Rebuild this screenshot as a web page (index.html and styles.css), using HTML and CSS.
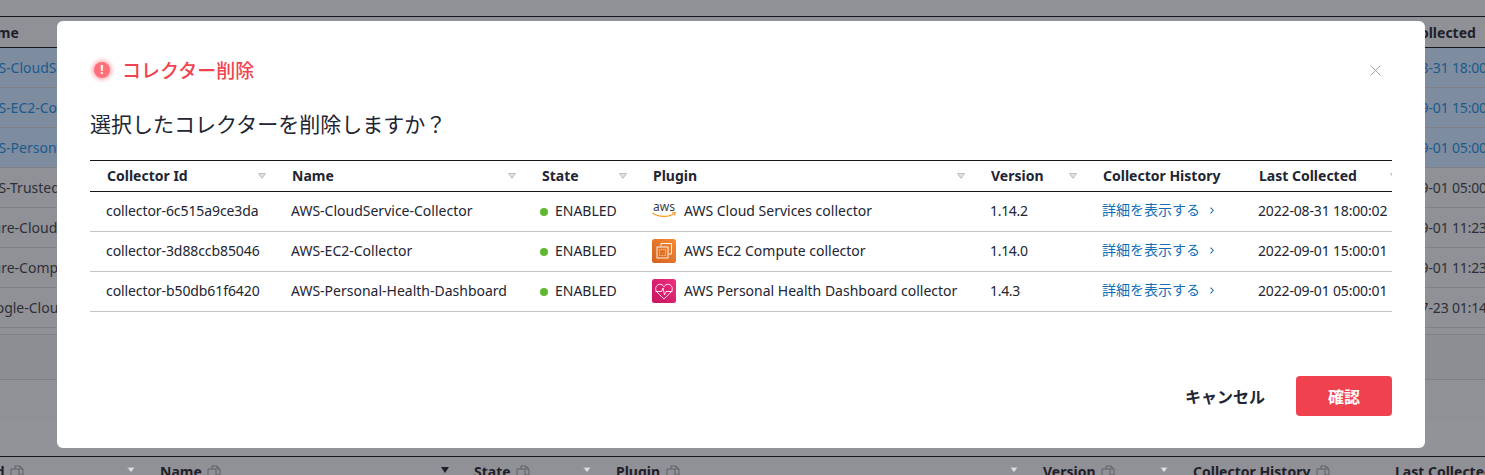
FILE: index.html
```html
<!DOCTYPE html>
<html lang="ja">
  <head>
    <meta charset="UTF-8" />
    <meta name="viewport" content="width=device-width, initial-scale=1.0" />
    <title>コレクター削除</title>
    <link rel="stylesheet" href="styles.css">
  </head>

  <body>
    <svg class="sprites" width="0" height="0" aria-hidden="true">
      <symbol id="sortIcon" viewBox="0 0 8 6">
        <path d="M0.6 0.6H7.4L4 5.3Z" fill="#e4e5e8" stroke="#a9abb2" stroke-width="0.8" />
      </symbol>
      <symbol id="copyIcon" viewBox="0 0 14 14">
        <path d="M5 1H10L13 4V10H9M5 1V4M1 4H9V13H1Z" fill="none" stroke="#5b5c63" stroke-width="0.9" />
        <path d="M10 1V4H13" fill="none" stroke="#5b5c63" stroke-width="0.9" />
      </symbol>
    </svg>

    <div class="bgPage">
      <div class="bgTable">
        <div class="bgHead">
          <span class="bgName">Name</span>
          <span class="bgDate">Last Collected</span>
        </div>
        <div class="bgRow selected"><span class="bgName">AWS-CloudService-Collector</span><span class="bgDate">2022-08-31 18:00:02</span></div>
        <div class="bgRow selected"><span class="bgName">AWS-EC2-Collector</span><span class="bgDate">2022-09-01 15:00:01</span></div>
        <div class="bgRow selected"><span class="bgName">AWS-Personal-Health-Dashboard</span><span class="bgDate">2022-09-01 05:00:01</span></div>
        <div class="bgRow"><span class="bgName">AWS-TrustedAdvisor-Collector</span><span class="bgDate">2022-09-01 05:00:01</span></div>
        <div class="bgRow"><span class="bgName">Azure-CloudService-Collector</span><span class="bgDate">2022-09-01 11:23:01</span></div>
        <div class="bgRow"><span class="bgName">Azure-Compute-Collector</span><span class="bgDate">2022-09-01 11:23:01</span></div>
        <div class="bgRow"><span class="bgName">Google-Cloud-Collector</span><span class="bgDate">2022-07-23 01:14:01</span></div>
      </div>
      <div class="bgBand"></div>
      <div class="bgBand dark"></div>
      <div class="bgBand"></div>
      <div class="bgBand light"></div>
      <div class="bgHead2">
        <div class="bgCol">Collector Id <svg class="copy"><use href="#copyIcon" /></svg><svg class="sort"><use href="#sortIcon" /></svg></div>
        <div class="bgCol">Name <svg class="copy"><use href="#copyIcon" /></svg><svg class="sort active" viewBox="0 0 8 6"><path d="M0 0H8L4 6Z" fill="#1f2029" /></svg></div>
        <div class="bgCol">State <svg class="copy"><use href="#copyIcon" /></svg><svg class="sort"><use href="#sortIcon" /></svg></div>
        <div class="bgCol">Plugin <svg class="copy"><use href="#copyIcon" /></svg><svg class="sort"><use href="#sortIcon" /></svg></div>
        <div class="bgCol">Version <svg class="copy"><use href="#copyIcon" /></svg><svg class="sort"><use href="#sortIcon" /></svg></div>
        <div class="bgCol">Collector History <svg class="copy"><use href="#copyIcon" /></svg></div>
        <div class="bgCol">Last Collected</div>
      </div>
    </div>

    <div class="overlay">
      <div class="modal">
        <div class="modalHeader">
          <div class="modalTitle">
            <span class="alertIcon">!</span>
            <span>コレクター削除</span>
          </div>
          <svg class="closeIcon" viewBox="0 0 11 11">
            <path d="M0.5 0.5L10.5 10.5M10.5 0.5L0.5 10.5" stroke="#a3a5ad" stroke-width="1" />
          </svg>
        </div>

        <p class="question">選択したコレクターを削除しますか？</p>

        <div class="tableWrap">
          <table class="collectors">
            <colgroup>
              <col class="colId" /><col class="colName" /><col class="colState" /><col class="colPlugin" />
              <col class="colVersion" /><col class="colHistory" /><col class="colLast" />
            </colgroup>
            <thead>
              <tr>
                <th>Collector Id<svg class="sort"><use href="#sortIcon" /></svg></th>
                <th>Name<svg class="sort"><use href="#sortIcon" /></svg></th>
                <th>State<svg class="sort"><use href="#sortIcon" /></svg></th>
                <th>Plugin<svg class="sort"><use href="#sortIcon" /></svg></th>
                <th>Version<svg class="sort"><use href="#sortIcon" /></svg></th>
                <th>Collector History</th>
                <th>Last Collected<svg class="sort"><use href="#sortIcon" /></svg></th>
              </tr>
            </thead>
            <tbody>
              <tr>
                <td class="idCell">collector-6c515a9ce3da</td>
                <td>AWS-CloudService-Collector</td>
                <td><span class="dot"></span>ENABLED</td>
                <td>
                  <div class="plugin">
                    <svg class="pluginIcon" viewBox="0 0 24 24">
                      <text x="12" y="11.5" text-anchor="middle" class="awsText">aws</text>
                      <path d="M0.5 14C7 18.5 17 18.5 22.5 14.5" fill="none" stroke="#f79a1e" stroke-width="1.3" />
                      <path d="M20 13.7L23.5 13.5L22.6 16.5" fill="none" stroke="#f79a1e" stroke-width="1" />
                    </svg>
                    AWS Cloud Services collector
                  </div>
                </td>
                <td class="versionCell">1.14.2</td>
                <td><a class="detail">詳細を表示する<svg class="chevron" viewBox="0 0 5 9"><path d="M0.7 0.7L4.2 4.5L0.7 8.3" /></svg></a></td>
                <td class="dateCell">2022-08-31 18:00:02</td>
              </tr>
              <tr>
                <td class="idCell">collector-3d88ccb85046</td>
                <td>AWS-EC2-Collector</td>
                <td><span class="dot"></span>ENABLED</td>
                <td>
                  <div class="plugin">
                    <svg class="pluginIcon" viewBox="0 0 24 24">
                      <defs>
                        <linearGradient id="ec2Grad" x1="0" y1="1" x2="1" y2="0">
                          <stop offset="0" stop-color="#d2601f" />
                          <stop offset="1" stop-color="#f58c34" />
                        </linearGradient>
                      </defs>
                      <rect width="24" height="24" rx="2.5" fill="url(#ec2Grad)" />
                      <path d="M9 7.5V4.5H19.5V15H16.5" fill="none" stroke="#fff" stroke-width="1" opacity="0.9" />
                      <rect x="5" y="8" width="11" height="11" fill="none" stroke="#fff" stroke-width="1" opacity="0.9" />
                      <rect x="7.5" y="10.5" width="6" height="6" fill="none" stroke="#fff" stroke-width="0.7" stroke-dasharray="1 0.6" opacity="0.8" />
                    </svg>
                    AWS EC2 Compute collector
                  </div>
                </td>
                <td class="versionCell">1.14.0</td>
                <td><a class="detail">詳細を表示する<svg class="chevron" viewBox="0 0 5 9"><path d="M0.7 0.7L4.2 4.5L0.7 8.3" /></svg></a></td>
                <td class="dateCell">2022-09-01 15:00:01</td>
              </tr>
              <tr>
                <td class="idCell">collector-b50db61f6420</td>
                <td>AWS-Personal-Health-Dashboard</td>
                <td><span class="dot"></span>ENABLED</td>
                <td>
                  <div class="plugin">
                    <svg class="pluginIcon" viewBox="0 0 24 24">
                      <defs>
                        <linearGradient id="healthGrad" x1="0" y1="1" x2="1" y2="0">
                          <stop offset="0" stop-color="#c4145f" />
                          <stop offset="1" stop-color="#ee2f7f" />
                        </linearGradient>
                      </defs>
                      <rect width="24" height="24" rx="2.5" fill="url(#healthGrad)" />
                      <path d="M12 20L5 13.2C2.6 10.6 3.6 5.8 7.6 5.3C9.5 5.1 11 6 12 7.8C13 6 14.5 5.1 16.4 5.3C20.4 5.8 21.4 10.6 19 13.2Z" fill="none" stroke="#fff" stroke-width="0.9" opacity="0.95" />
                      <path d="M3.5 12.5H9.5L11 9L12.5 16L14 12.5H20.5" fill="none" stroke="#fff" stroke-width="0.9" opacity="0.95" />
                    </svg>
                    AWS Personal Health Dashboard collector
                  </div>
                </td>
                <td class="versionCell">1.4.3</td>
                <td><a class="detail">詳細を表示する<svg class="chevron" viewBox="0 0 5 9"><path d="M0.7 0.7L4.2 4.5L0.7 8.3" /></svg></a></td>
                <td class="dateCell">2022-09-01 05:00:01</td>
              </tr>
            </tbody>
          </table>
        </div>

        <div class="modalFooter">
          <button class="cancelBtn">キャンセル</button>
          <button class="confirmBtn">確認</button>
        </div>
      </div>
    </div>
  </body>
</html>
```

FILE: styles.css
```css
html,
body {
  height: 100%;
}

body {
  margin: 0;
  overflow: hidden;
  font-family: "Noto Sans", "Noto Sans CJK JP", sans-serif;
  font-size: 14px;
  color: #222532;
  background-color: #909197;
}

.sprites {
  position: absolute;
}

/* page behind the dialog */
.bgPage {
  padding-top: 16px;
  color: #2e2f36;
}

.bgTable {
  border-top: 1px solid #16171c;
}

.bgHead {
  height: 30px;
  display: flex;
  justify-content: space-between;
  align-items: center;
  border-bottom: 1px solid #16171c;
  font-weight: 700;
  color: #1f2029;
}

.bgRow {
  height: 39px;
  display: flex;
  justify-content: space-between;
  align-items: center;
  border-bottom: 1px solid #7f8086;
}

.bgRow.selected {
  background-color: #7d8c9f;
  color: #1c5a8c;
}

.bgName {
  margin-left: -23px;
  white-space: nowrap;
}

.bgDate {
  width: 108px;
  letter-spacing: -0.16px;
  white-space: nowrap;
  overflow: hidden;
}

.bgHead .bgDate {
  width: 107px;
  letter-spacing: 0;
}

.bgBand {
  height: 6px;
  border-bottom: 1px solid #7f8086;
}

.bgBand.dark {
  height: 44px;
  background-color: #8d8e94;
}

.bgBand + .bgBand.dark + .bgBand {
  height: 40px;
  border-bottom: none;
}

.bgBand.light {
  height: 36px;
  border-bottom: none;
  background-color: #929399;
}

.bgHead2 {
  display: grid;
  grid-template-columns: 236px 314px 142px 427px 150px 202px 200px;
  margin-left: -92px;
  border-top: 1px solid #16171c;
  font-weight: 700;
  color: #1f2029;
  height: 30px;
}

.bgCol {
  position: relative;
  padding: 5px 16px;
  white-space: nowrap;
}

.bgCol .sort {
  top: 10px;
}

.copy {
  width: 14px;
  height: 14px;
  vertical-align: -2px;
  margin-left: 2px;
}

/* dialog */
.overlay {
  position: fixed;
  inset: 0;
  display: flex;
  justify-content: center;
  align-items: flex-start;
  padding: 21px 3px 0 0;
}

.modal {
  width: 1368px;
  height: 427px;
  box-sizing: border-box;
  padding: 32px 33px;
  background-color: #fff;
  border-radius: 6px;
  display: flex;
  flex-direction: column;
}

.modalHeader {
  display: flex;
  justify-content: space-between;
  align-items: center;
  height: 34px;
  padding-left: 2px;
}

.modalTitle {
  display: flex;
  align-items: center;
  gap: 10px;
  font-size: 19px;
  font-weight: 500;
  color: #f2434f;
}

.alertIcon {
  width: 16px;
  height: 16px;
  margin: 2px;
  border-radius: 50%;
  background-color: #ff6f7a;
  box-shadow: 0 0 4px 2px #ffb0b6;
  color: #fff;
  font-size: 12px;
  font-weight: 700;
  line-height: 16px;
  text-align: center;
}

.closeIcon {
  width: 11px;
  height: 11px;
  margin-right: 11px;
}

.question {
  margin: 22px 0 0 0;
  font-size: 21px;
  line-height: 30px;
}

.tableWrap {
  margin-top: 21px;
  overflow: hidden;
}

.collectors {
  width: 1317px;
  table-layout: fixed;
  border-collapse: collapse;
  border-top: 1px solid #16171c;
}

.colId { width: 185px; }
.colName { width: 250px; }
.colState { width: 111px; }
.colPlugin { width: 338px; }
.colVersion { width: 112px; }
.colHistory { width: 156px; }
.colLast { width: 165px; }

th {
  position: relative;
  height: 28px;
  padding: 0 0 2px 17px;
  text-align: left;
  font-weight: 700;
  border-bottom: 1px solid #16171c;
  white-space: nowrap;
}

td {
  height: 37px;
  padding: 0 0 2px 16px;
  border-bottom: 1px solid #c4c5ca;
  white-space: nowrap;
}

.idCell {
  letter-spacing: -0.09px;
}

.versionCell {
  letter-spacing: -0.3px;
}

.dateCell {
  letter-spacing: -0.16px;
}

.sort {
  position: absolute;
  top: 12px;
  right: 9px;
  width: 8px;
  height: 6px;
}

.dot {
  display: inline-block;
  width: 8px;
  height: 8px;
  margin: 0 7px 0 -1px;
  border-radius: 50%;
  background-color: #60b731;
}

.plugin {
  display: flex;
  align-items: center;
  gap: 8px;
}

.pluginIcon {
  width: 24px;
  height: 24px;
}

.awsText {
  font-size: 12px;
  fill: #3a3d4a;
}

.detail {
  color: #0f6fb5;
  display: inline-flex;
  align-items: center;
  padding-bottom: 3px;
}

.chevron {
  width: 4px;
  height: 7px;
  margin: 3px 0 0 10px;
  fill: none;
  stroke: #0f6fb5;
  stroke-width: 1.4;
}

.modalFooter {
  margin-top: auto;
  display: flex;
  justify-content: flex-end;
  align-items: center;
  gap: 31px;
}

button {
  font-family: inherit;
  font-size: 16px;
  font-weight: 700;
  border: none;
  cursor: pointer;
}

.cancelBtn {
  background: none;
  color: #222532;
  padding: 0;
}

.confirmBtn {
  width: 96px;
  height: 40px;
  background-color: #f0424e;
  color: #fff;
  border-radius: 4px;
}
```
